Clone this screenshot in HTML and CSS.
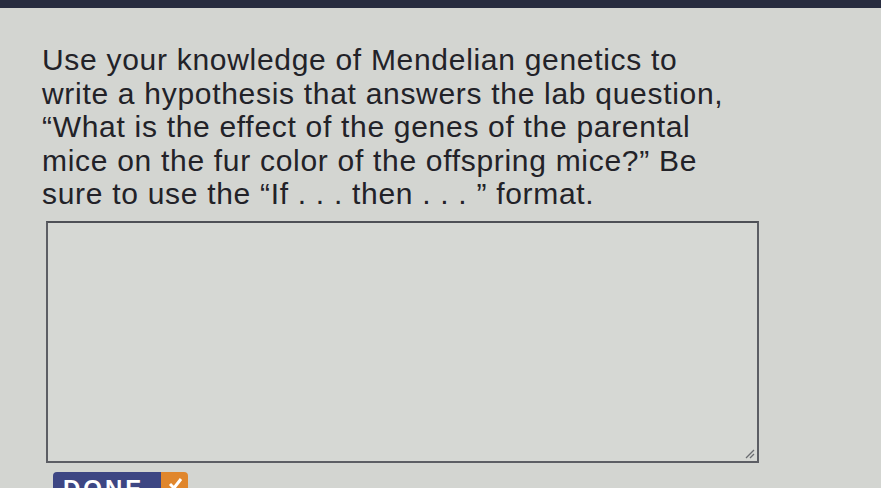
FILE: index.html
```html
<!DOCTYPE html>
<html>
<head>
<meta charset="utf-8">
<link rel="stylesheet" href="styles.css">
</head>
<body>
<div class="topbar"></div>
<main class="content">
  <p class="prompt">Use your knowledge of Mendelian genetics to<br>write a hypothesis that answers the lab question,<br>“What is the effect of the genes of the parental<br>mice on the fur color of the offspring mice?” Be<br>sure to use the “If . . . then . . . ” format.</p>
  <div class="answer">
    <svg class="grip" width="12" height="12" viewBox="0 0 12 12"><path d="M11 3 L3 11 M11 7 L7 11" stroke="#6a6c70" stroke-width="1.3" fill="none"/></svg>
  </div>
  <div class="done">
    <span class="done-label">DONE</span>
    <span class="done-check"><svg width="16" height="16" viewBox="0 0 16 16"><path d="M3 8 L7 12 L14 3" stroke="#fff" stroke-width="3" fill="none"/></svg></span>
  </div>
</main>
</body>
</html>
```
FILE: styles.css
```css
html, body {
  margin: 0;
  padding: 0;
  height: 100%;
  overflow: hidden;
}
body {
  background: #d3d5d1;
  font-family: "Liberation Sans", Arial, sans-serif;
}
.topbar {
  height: 8px;
  background: #282c3f;
}
.content {
  padding: 35px 0 0 42px;
}
.prompt {
  margin: 0;
  font-size: 30px;
  line-height: 33.5px;
  letter-spacing: 0.7px;
  color: #222228;
}
.answer {
  position: relative;
  margin: 10px 0 0 4px;
  width: 709px;
  height: 238px;
  border: 2px solid #5c5e64;
  border-top-color: #4e5056;
  background: #d6d8d4;
}
.grip {
  position: absolute;
  right: 2px;
  bottom: 2px;
}
.done {
  display: flex;
  margin: 9px 0 0 11px;
  width: 135px;
  height: 30px;
  border-radius: 4px;
  overflow: hidden;
}
.done-label {
  flex: 1;
  background: #3d4683;
  color: #fff;
  font-weight: bold;
  font-size: 24px;
  letter-spacing: 3px;
  padding: 3px 0 0 10px;
}
.done-check {
  width: 27px;
  background: #e0862c;
  display: flex;
  justify-content: center;
  padding-top: 4px;
}
```
